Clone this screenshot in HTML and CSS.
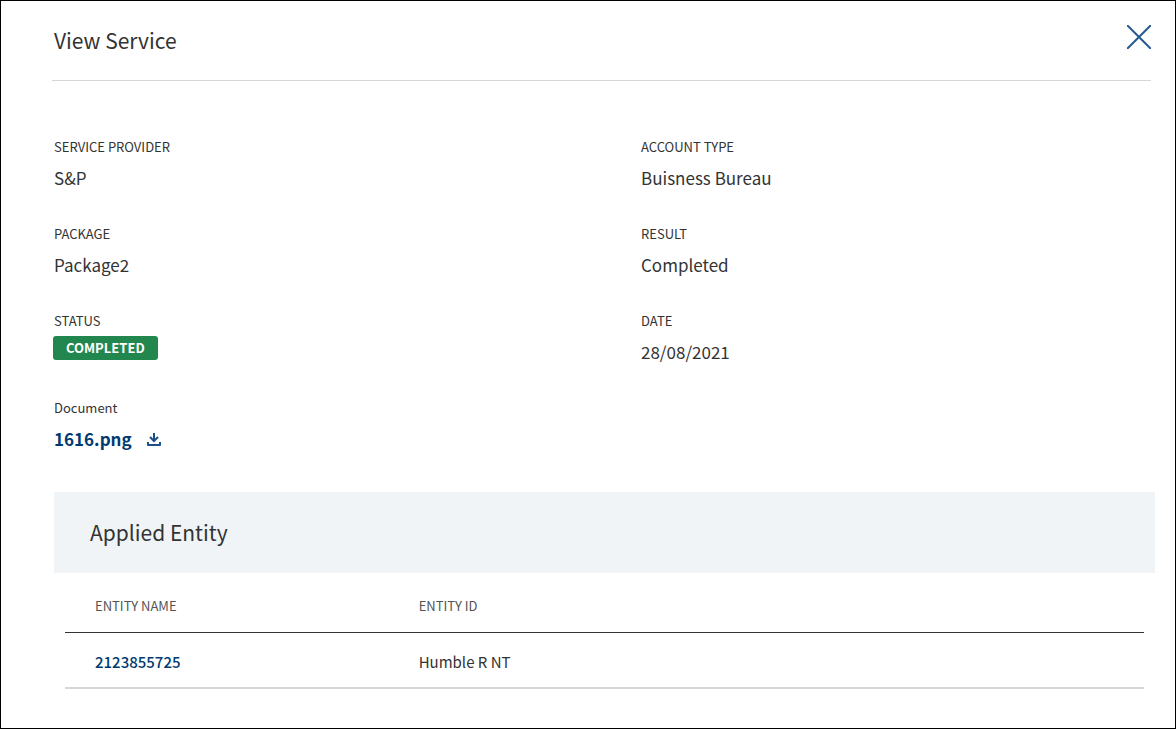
FILE: index.html
```html
<!DOCTYPE html>
<html lang="en">
<head>
    <meta charset="UTF-8">
    <meta name="viewport" content="width=device-width, initial-scale=1.0">
    <link rel="stylesheet" href="styles.css">
    <title>View Service</title>
</head>
<body>
    <main class="modal">
        <header class="modal-header">
            <h1>View Service</h1>
            <button type="button" class="close-btn" aria-label="Close">
                <svg width="24" height="24" viewBox="0 0 24 24" fill="none" stroke="#265a91" stroke-width="2">
                    <path d="M0 0L24 24M24 0L0 24"/>
                </svg>
            </button>
        </header>

        <dl class="details">
            <div class="field">
                <dt>SERVICE PROVIDER</dt>
                <dd>S&amp;P</dd>
            </div>
            <div class="field">
                <dt>ACCOUNT TYPE</dt>
                <dd>Buisness Bureau</dd>
            </div>
            <div class="field">
                <dt>PACKAGE</dt>
                <dd>Package2</dd>
            </div>
            <div class="field">
                <dt>RESULT</dt>
                <dd>Completed</dd>
            </div>
            <div class="field status">
                <dt>STATUS</dt>
                <dd><span class="badge">COMPLETED</span></dd>
            </div>
            <div class="field">
                <dt>DATE</dt>
                <dd>28/08/2021</dd>
            </div>
            <div class="field">
                <dt>Document</dt>
                <dd>
                    <a href="#" class="document">1616.png
                        <svg width="14" height="14" viewBox="0 0 14 14" fill="none" stroke="#1d4f87" stroke-width="2" aria-hidden="true">
                            <path d="M7 1V8M3 5L7 9L11 5"/>
                            <path d="M1 10V13H13V10" stroke-linejoin="round"/>
                        </svg>
                    </a>
                </dd>
            </div>
        </dl>

        <section class="entities">
            <h2>Applied Entity</h2>
            <div class="table-wrap">
                <table>
                    <thead>
                        <tr>
                            <th scope="col" class="name-col">ENTITY NAME</th>
                            <th scope="col">ENTITY ID</th>
                        </tr>
                    </thead>
                    <tbody>
                        <tr>
                            <td><a href="#">2123855725</a></td>
                            <td>Humble R NT</td>
                        </tr>
                    </tbody>
                </table>
            </div>
        </section>
    </main>
</body>
</html>
```
FILE: styles.css
```css
* {
    box-sizing: border-box;
}

body {
    margin: 0;
    font-family: "Source Sans Pro", "Noto Sans CJK SC", sans-serif;
    font-size: 15px;
    color: #333;
    background-color: #fff;
}

.modal {
    min-height: 100vh;
    border: 1px solid #000;
}

.modal-header {
    display: flex;
    justify-content: space-between;
    align-items: center;
    margin: 0 24px 0 51px;
    height: 80px;
    border-bottom: 1px solid #d6d6d6;
    padding-bottom: 8px;
}

h1,
h2 {
    margin: 0;
    font-size: 21px;
    font-weight: 400;
    line-height: 32px;
}

.modal-header h1 {
    padding: 6px 0 0 2px;
}

.close-btn {
    display: flex;
    padding: 0;
    border: none;
    background: none;
    cursor: pointer;
}

/* service details */
.details {
    display: grid;
    grid-template-columns: 1fr 1fr;
    margin: 56px 0 0;
}

.field {
    padding: 0 0 34px 53px;
}

.field dt {
    font-size: 13px;
    line-height: 20px;
}

.field dd {
    margin: 9px 0 0;
    font-size: 17px;
    line-height: 24px;
}

.field.status dd {
    margin-top: 5px;
    margin-left: -1px;
}

.badge {
    display: block;
    width: fit-content;
    padding: 0 13px;
    border-radius: 3px;
    background-color: #22874f;
    color: #fff;
    font-size: 13px;
    font-weight: 700;
}

a {
    color: #003a70;
    text-decoration: none;
}

.document {
    display: inline-flex;
    align-items: center;
    gap: 15px;
    font-weight: 700;
}

/* applied entity table */
.entities {
    margin: 7px 20px 0 53px;
}

.entities h2 {
    padding: 24px 36px 25px;
    background-color: #f0f4f7;
}

.table-wrap {
    padding: 0 11px;
}

table {
    width: 100%;
    border-collapse: collapse;
    text-align: left;
}

th,
td {
    padding: 0 0 0 30px;
}

th {
    height: 59px;
    padding-top: 7px;
    border-bottom: 1px solid #333;
    color: #555;
    font-size: 13px;
    font-weight: 400;
}

td {
    height: 56px;
    padding-top: 4px;
    border-bottom: 2px solid #d6d6d6;
}

td a {
    font-weight: 500;
}

.name-col {
    width: 30%;
}
```
